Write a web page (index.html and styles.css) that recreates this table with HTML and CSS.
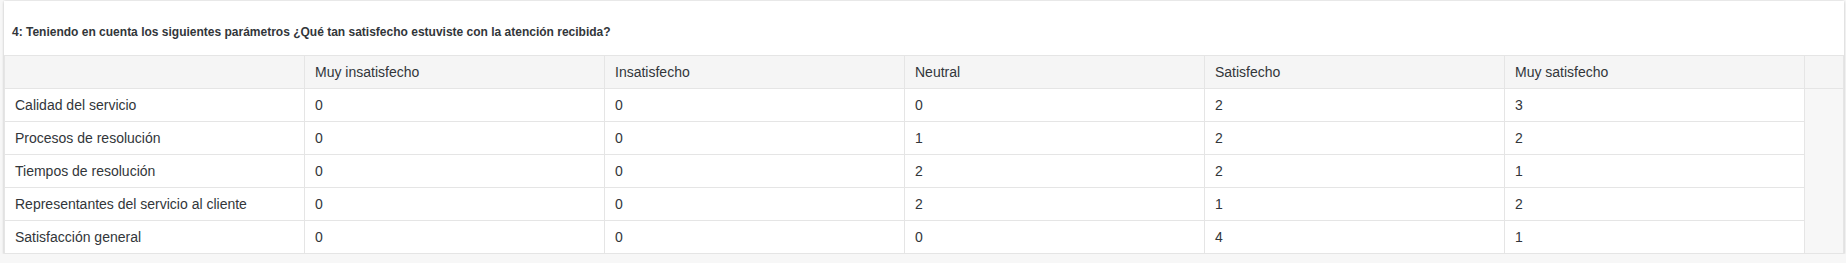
FILE: index.html
```html
<!DOCTYPE html>
<html lang="es">
<head>
<meta charset="utf-8">
<title>Encuesta</title>
<link rel="stylesheet" href="styles.css">
</head>
<body>
<section class="card">
  <h2 class="question">4: Teniendo en cuenta los siguientes parámetros ¿Qué tan satisfecho estuviste con la atención recibida?</h2>
  <table class="grid">
    <colgroup>
      <col class="c"><col class="c"><col class="c"><col class="c"><col class="c"><col class="c"><col class="filler">
    </colgroup>
    <thead>
      <tr>
        <th></th>
        <th>Muy insatisfecho</th>
        <th>Insatisfecho</th>
        <th>Neutral</th>
        <th>Satisfecho</th>
        <th>Muy satisfecho</th>
        <th></th>
      </tr>
    </thead>
    <tbody>
      <tr>
        <td>Calidad del servicio</td><td>0</td><td>0</td><td>0</td><td>2</td><td>3</td>
        <td class="spacer" rowspan="5"></td>
      </tr>
      <tr>
        <td>Procesos de resolución</td><td>0</td><td>0</td><td>1</td><td>2</td><td>2</td>
      </tr>
      <tr>
        <td>Tiempos de resolución</td><td>0</td><td>0</td><td>2</td><td>2</td><td>1</td>
      </tr>
      <tr>
        <td>Representantes del servicio al cliente</td><td>0</td><td>0</td><td>2</td><td>1</td><td>2</td>
      </tr>
      <tr>
        <td>Satisfacción general</td><td>0</td><td>0</td><td>0</td><td>4</td><td>1</td>
      </tr>
    </tbody>
  </table>
</section>
</body>
</html>
```

FILE: styles.css
```css
html, body {
  margin: 0;
  padding: 0;
  background: #f7f7f7;
}

body {
  padding: 1px 2px 0 4px;
  font-family: "Liberation Sans", Arial, sans-serif;
  color: #32363a;
}

.card {
  width: 1840px;
  background: #ffffff;
  box-shadow: 0 0 2px rgba(0, 0, 0, 0.12), 0 1px 3px rgba(0, 0, 0, 0.12);
}

.question {
  margin: 0;
  padding: 24px 8px 16px 8px;
  font-size: 12px;
  line-height: 14px;
  font-weight: bold;
  color: #32363a;
}

.grid {
  width: 1840px;
  table-layout: fixed;
  border-collapse: collapse;
  font-size: 14px;
}

.grid col.c {
  width: 300px;
}

.grid th,
.grid td {
  border: 1px solid #e5e5e5;
  height: 33px;
  padding: 0 10px 1px 10px;
  box-sizing: border-box;
  text-align: left;
  vertical-align: middle;
  font-weight: normal;
  white-space: nowrap;
}

.grid thead th {
  background: #f5f5f5;
}

.grid td.spacer {
  background: #f7f7f7;
}
```
